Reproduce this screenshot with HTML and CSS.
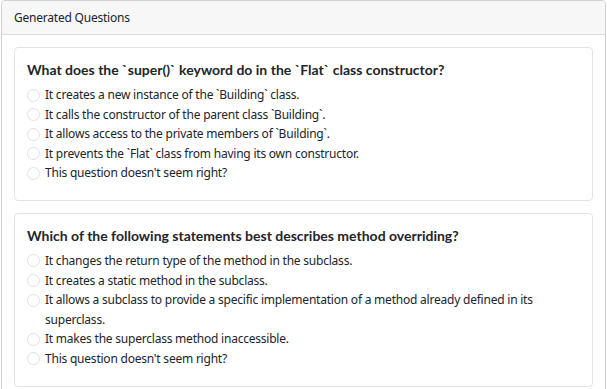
FILE: index.html
```html
<!DOCTYPE html>
<html lang="en">
<head>
<meta charset="utf-8">
<title>Generated Questions</title>
<link rel="stylesheet" href="styles.css">
</head>
<body>
<div class="card">
  <div class="card-header">Generated Questions</div>
  <div class="card-body">
    <div class="q-card">
      <h5 class="q-title">What does the `super()` keyword do in the `Flat` class constructor?</h5>
      <ul class="options">
        <li class="option"><span class="radio"></span><span class="label">It creates a new instance of the `Building` class.</span></li>
        <li class="option"><span class="radio"></span><span class="label">It calls the constructor of the parent class `Building`.</span></li>
        <li class="option"><span class="radio"></span><span class="label">It allows access to the private members of `Building`.</span></li>
        <li class="option"><span class="radio"></span><span class="label">It prevents the `Flat` class from having its own constructor.</span></li>
        <li class="option"><span class="radio"></span><span class="label">This question doesn't seem right?</span></li>
      </ul>
    </div>
    <div class="q-card">
      <h5 class="q-title">Which of the following statements best describes method overriding?</h5>
      <ul class="options">
        <li class="option"><span class="radio"></span><span class="label">It changes the return type of the method in the subclass.</span></li>
        <li class="option"><span class="radio"></span><span class="label">It creates a static method in the subclass.</span></li>
        <li class="option"><span class="radio"></span><span class="label">It allows a subclass to provide a specific implementation of a method already defined in its superclass.</span></li>
        <li class="option"><span class="radio"></span><span class="label">It makes the superclass method inaccessible.</span></li>
        <li class="option"><span class="radio"></span><span class="label">This question doesn't seem right?</span></li>
      </ul>
    </div>
  </div>
</div>
</body>
</html>
```
FILE: styles.css
```css
* { box-sizing: border-box; }
html, body { margin: 0; padding: 0; background: #fff; }
body {
  padding: 0 1px;
  font-family: "Noto Sans", "Open Sans", sans-serif;
  font-size: 12px;
  letter-spacing: -0.22px;
  line-height: 19.6px;
  color: #212529;
}
.card {
  border: 1px solid #cfd2d4;
  border-radius: 4px;
  background: #fff;
}
.card-header {
  background: #f7f7f7;
  border-bottom: 1px solid #dcdcdc;
  padding: 6.5px 12px;
  height: 34px;
  border-radius: 4px 4px 0 0;
}
.card-body {
  padding: 12px;
  display: flex;
  flex-direction: column;
  gap: 12px;
}
.q-card {
  border: 1px solid #e2e3e5;
  border-radius: 4px;
  padding: 12px 12px 17px;
}
.q-title {
  margin: 0 0 6px;
  font-family: Lato, sans-serif;
  font-weight: 700;
  font-size: 14px;
  letter-spacing: 0;
  line-height: 19px;
  color: #212529;
}
.options {
  list-style: none;
  margin: 0;
  padding: 0;
}
.option {
  display: flex;
  align-items: flex-start;
}
.radio {
  flex: none;
  width: 13px;
  height: 13px;
  border: 1px solid #dee2e6;
  border-radius: 50%;
  margin-top: 3.5px;
  margin-right: 5px;
  background: #fff;
}
.label { flex: 1; }
```
